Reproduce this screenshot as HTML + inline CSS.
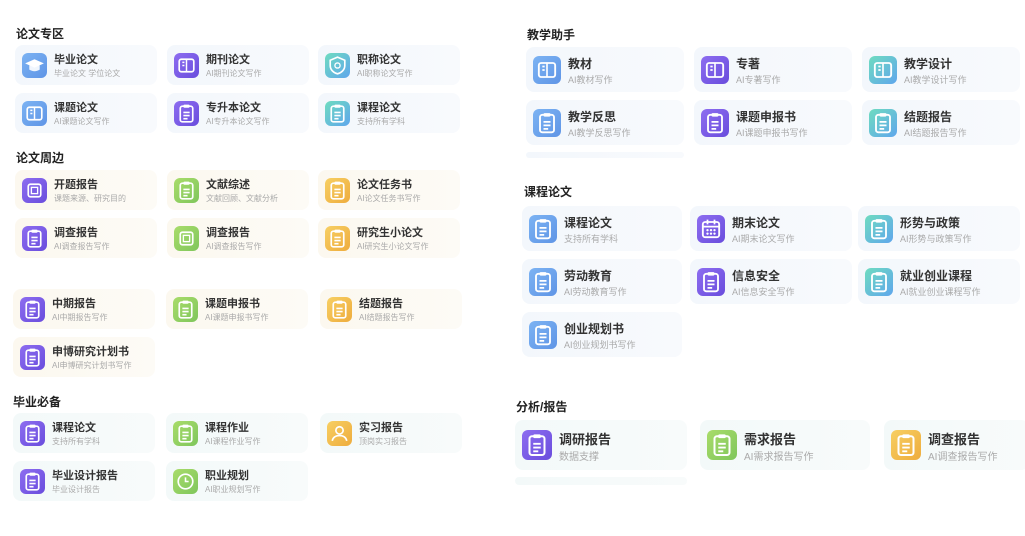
<!DOCTYPE html>
<html><head><meta charset="utf-8"><style>
*{margin:0;padding:0;box-sizing:border-box}
body{width:1025px;height:536px;background:#fff;position:relative;overflow:hidden;font-family:"Liberation Sans","Noto Sans CJK SC",sans-serif}
.h{position:absolute;font-weight:bold;color:#222;font-size:12px}
.c{position:absolute;border-radius:8px;background:linear-gradient(90deg,#f3f7fc,#f8fafd)}
.w{background:linear-gradient(90deg,#fcf8ef,#fdfbf6)}
.g{background:linear-gradient(90deg,#f3f9f9,#f8fbfb)}
.c .i{position:absolute;border-radius:6px}
.c .t{position:absolute;font-weight:bold;color:#333;white-space:nowrap}
.c .s{position:absolute;color:#aaa;white-space:nowrap}
.b{background:linear-gradient(135deg,#7cb3f3,#5f95e6)}
.p{background:linear-gradient(135deg,#8d6df0,#6a4ddd)}
.q{background:linear-gradient(135deg,#6fdcc0,#5fa6ec)}
.gr{background:linear-gradient(135deg,#a9dc6a,#7fc65c)}
.o{background:linear-gradient(135deg,#f7cf63,#eeac3d)}
svg{position:absolute;left:0;top:0;width:100%;height:100%}
</style></head><body>
<div class="h" style="left:16px;top:25px">论文专区</div>
<div class="h" style="left:16px;top:149px">论文周边</div>
<div class="h" style="left:13px;top:393px">毕业必备</div>
<div class="h" style="left:527px;top:26px">教学助手</div>
<div class="h" style="left:524px;top:183px">课程论文</div>
<div class="h" style="left:516px;top:398px">分析/报告</div>
<div class="c" style="left:526px;top:152px;width:158px;height:6px"></div>
<div class="c g" style="left:515px;top:477px;width:172px;height:8px"></div>
<div id="root"></div>
<script>
const clip='<svg viewBox="0 0 24 24"><rect x="6" y="5" width="12" height="15" rx="2" fill="none" stroke="#fff" stroke-width="1.6"/><rect x="9" y="3.5" width="6" height="3" rx="1" fill="#fff"/><path d="M9 11h6M9 14h6M9 17h4" stroke="#fff" stroke-width="1.5"/></svg>';
const cap='<svg viewBox="0 0 24 24"><path d="M3 10l9-4 9 4-9 4z" fill="#fff"/><path d="M7 12v4c3 2 7 2 10 0v-4" fill="#fff" opacity=".9"/></svg>';
const book='<svg viewBox="0 0 24 24"><rect x="5" y="6" width="14" height="12" rx="2" fill="none" stroke="#fff" stroke-width="1.6"/><path d="M12 6v12M8 9h2M8 12h2" stroke="#fff" stroke-width="1.4"/></svg>';
const shield='<svg viewBox="0 0 24 24"><path d="M12 4l7 3v5c0 4-3 7-7 8-4-1-7-4-7-8V7z" fill="none" stroke="#fff" stroke-width="1.6"/><circle cx="12" cy="12" r="2.5" fill="none" stroke="#fff" stroke-width="1.3"/></svg>';
const cal='<svg viewBox="0 0 24 24"><rect x="5" y="6" width="14" height="13" rx="2" fill="none" stroke="#fff" stroke-width="1.6"/><path d="M5 10h14M9 4v4M15 4v4" stroke="#fff" stroke-width="1.5"/><g fill="#fff"><circle cx="9" cy="13" r="1"/><circle cx="12" cy="13" r="1"/><circle cx="15" cy="13" r="1"/><circle cx="9" cy="16" r="1"/><circle cx="12" cy="16" r="1"/><circle cx="15" cy="16" r="1"/></g></svg>';
const person='<svg viewBox="0 0 24 24"><circle cx="12" cy="9" r="3.5" fill="none" stroke="#fff" stroke-width="1.6"/><path d="M5 19c1-4 4-5 7-5s6 1 7 5" fill="none" stroke="#fff" stroke-width="1.6"/></svg>';
const clock='<svg viewBox="0 0 24 24"><circle cx="12" cy="12" r="7" fill="none" stroke="#fff" stroke-width="1.6"/><path d="M12 8v4h3" fill="none" stroke="#fff" stroke-width="1.5"/></svg>';
const sq='<svg viewBox="0 0 24 24"><rect x="6" y="6" width="12" height="12" rx="2" fill="none" stroke="#fff" stroke-width="1.6"/><rect x="9" y="9" width="6" height="6" fill="none" stroke="#fff" stroke-width="1.3"/></svg>';
let h='';
function C(x,y,w,ht,bg,col,ic,t,s,is,ts){
 const ix=7, iy=(ht-is)/2;
 const tx=ix+is+7;
 h+=`<div class="c ${bg}" style="left:${x}px;top:${y}px;width:${w}px;height:${ht}px"><div class="i ${col}" style="left:${ix}px;top:${iy}px;width:${is}px;height:${is}px">${ic}</div><div class="t" style="left:${tx}px;top:${ht/2-ts-3}px;font-size:${ts}px">${t}</div><div class="s" style="left:${tx}px;top:${ht/2+3}px;font-size:${Math.round(ts*0.75)}px">${s}</div></div>`;
}
const L=(x,y,bg,col,ic,t,s)=>C(x,y,142,40,bg,col,ic,t,s,25,11);
L(15,45,'','b',cap,'毕业论文','毕业论文 学位论文');
L(167,45,'','p',book,'期刊论文','AI期刊论文写作');
L(318,45,'','q',shield,'职称论文','AI职称论文写作');
L(15,93,'','b',book,'课题论文','AI课题论文写作');
L(167,93,'','p',clip,'专升本论文','AI专升本论文写作');
L(318,93,'','q',clip,'课程论文','支持所有学科');
L(15,170,'w','p',sq,'开题报告','课题来源、研究目的');
L(167,170,'w','gr',clip,'文献综述','文献回顾、文献分析');
L(318,170,'w','o',clip,'论文任务书','AI论文任务书写作');
L(15,218,'w','p',clip,'调查报告','AI调查报告写作');
L(167,218,'w','gr',sq,'调查报告','AI调查报告写作');
L(318,218,'w','o',clip,'研究生小论文','AI研究生小论文写作');
L(13,289,'w','p',clip,'中期报告','AI中期报告写作');
L(166,289,'w','gr',clip,'课题申报书','AI课题申报书写作');
L(320,289,'w','o',clip,'结题报告','AI结题报告写作');
L(13,337,'w','p',clip,'申博研究计划书','AI申博研究计划书写作');
L(13,413,'g','p',clip,'课程论文','支持所有学科');
L(166,413,'g','gr',clip,'课程作业','AI课程作业写作');
L(320,413,'g','o',person,'实习报告','顶岗实习报告');
L(13,461,'g','p',clip,'毕业设计报告','毕业设计报告');
L(166,461,'g','gr',clock,'职业规划','AI职业规划写作');
const R=(x,y,col,ic,t,s,w)=>C(x,y,w||158,45,'',col,ic,t,s,28,12);
R(526,47,'b',book,'教材','AI教材写作');
R(694,47,'p',book,'专著','AI专著写作');
R(862,47,'q',book,'教学设计','AI教学设计写作');
R(526,100,'b',clip,'教学反思','AI教学反思写作');
R(694,100,'p',clip,'课题申报书','AI课题申报书写作');
R(862,100,'q',clip,'结题报告','AI结题报告写作');
R(522,206,'b',clip,'课程论文','支持所有学科',160);
R(690,206,'p',cal,'期末论文','AI期末论文写作',162);
R(858,206,'q',clip,'形势与政策','AI形势与政策写作',162);
R(522,259,'b',clip,'劳动教育','AI劳动教育写作',160);
R(690,259,'p',clip,'信息安全','AI信息安全写作',162);
R(858,259,'q',clip,'就业创业课程','AI就业创业课程写作',162);
R(522,312,'b',clip,'创业规划书','AI创业规划书写作',160);
const A=(x,w,col,t,s)=>C(x,420,w,50,'g',col,clip,t,s,30,13);
A(515,172,'p','调研报告','数据支撑');
A(700,170,'gr','需求报告','AI需求报告写作');
A(884,145,'o','调查报告','AI调查报告写作');
document.getElementById('root').innerHTML=h;
</script>
</body></html>
